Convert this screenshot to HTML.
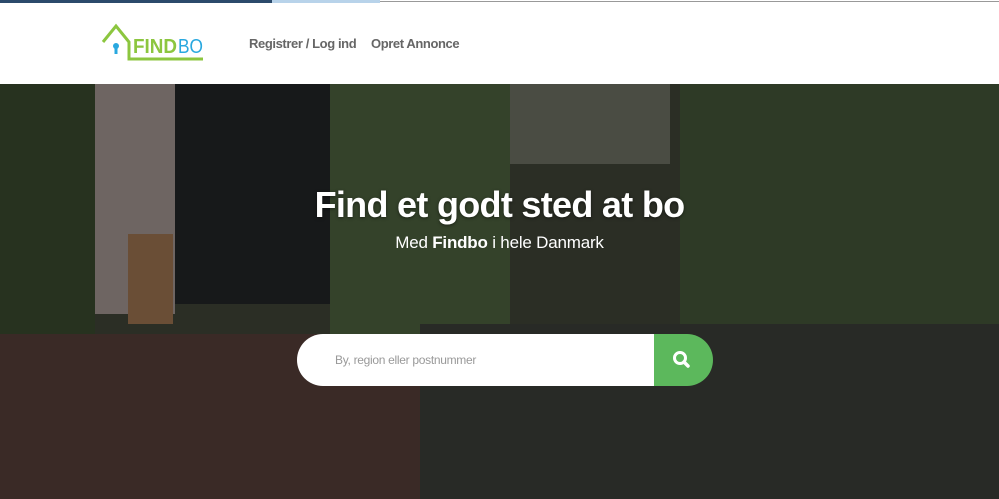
<!DOCTYPE html>
<html><head><style>
body{margin:0;width:999px;height:499px;overflow:hidden;font-family:"Liberation Sans",sans-serif;position:relative;background:#fff}
.top1{position:absolute;left:0;top:0;width:272px;height:3px;background:#2b4a6b}
.top2{position:absolute;left:272px;top:0;width:108px;height:3px;background:#b8d3ea}
.top3{position:absolute;left:380px;top:1px;width:619px;height:1px;background:#999}
.nav{position:absolute;top:36px;font-weight:bold;font-size:13px;color:#666;letter-spacing:-0.4px}
.hero{position:absolute;left:0;top:84px;width:999px;height:415px;overflow:hidden;background:#2b2e25}
.b{position:absolute}
h1{position:absolute;left:0;width:999px;top:184px;margin:0;text-align:center;color:#fff;font-size:36px;letter-spacing:-0.7px;font-weight:bold;text-shadow:0 1px 3px rgba(0,0,0,.5)}
.sub{position:absolute;left:0;width:999px;top:233px;text-align:center;color:#fff;font-size:17px;letter-spacing:-0.2px}
.search{position:absolute;left:297px;top:334px;width:357px;height:52px;background:#fff;border-radius:26px 0 0 26px}
.search span{position:absolute;left:38px;top:19px;font-size:12px;color:#999;letter-spacing:-0.3px}
.btn{position:absolute;left:654px;top:334px;width:59px;height:52px;background:#5cb85c;border-radius:0 26px 26px 0}
</style></head><body>
<div class="top1"></div><div class="top2"></div><div class="top3"></div>
<svg style="position:absolute;left:100px;top:22px" width="106" height="40">
<path d="M3 20 L16 4 L29 20 L29 37 L103 37" fill="none" stroke="#8cc63f" stroke-width="3"/>
<circle cx="16" cy="24" r="3" fill="#29a8df"/><rect x="14.5" y="24" width="3" height="8" fill="#29a8df"/>
<text x="33" y="31" font-family="Liberation Sans" font-weight="bold" font-size="20" fill="#8cc63f" textLength="44" lengthAdjust="spacingAndGlyphs">FIND</text>
<text x="78" y="31" font-family="Liberation Sans" font-size="20" fill="#29a8df" textLength="25" lengthAdjust="spacingAndGlyphs">BO</text>
</svg>
<div class="nav" style="left:249px">Registrer / Log ind</div>
<div class="nav" style="left:371px">Opret Annonce</div>
<div class="hero">
<div class="b" style="left:0;top:0;width:95px;height:260px;background:#27321f"></div>
<div class="b" style="left:95px;top:0;width:80px;height:230px;background:#6e6562"></div>
<div class="b" style="left:175px;top:0;width:160px;height:220px;background:#17191a"></div>
<div class="b" style="left:330px;top:0;width:180px;height:250px;background:#34422a"></div>
<div class="b" style="left:510px;top:0;width:160px;height:80px;background:#4a4c43"></div>
<div class="b" style="left:680px;top:0;width:319px;height:260px;background:#2e3a26"></div>
<div class="b" style="left:128px;top:150px;width:45px;height:90px;background:#6a4e36"></div>
<div class="b" style="left:0;top:250px;width:420px;height:165px;background:#3a2a26"></div>
<div class="b" style="left:420px;top:240px;width:579px;height:175px;background:#282a26"></div>
</div>
<h1>Find et godt sted at bo</h1>
<div class="sub">Med <b>Findbo</b> i hele Danmark</div>
<div class="search"><span>By, region eller postnummer</span></div>
<div class="btn"><svg width="59" height="52"><circle cx="26" cy="24" r="5.5" fill="none" stroke="#fff" stroke-width="3"/><path d="M30 28 L34 32" stroke="#fff" stroke-width="3.5" stroke-linecap="round"/></svg></div>
</body></html>
